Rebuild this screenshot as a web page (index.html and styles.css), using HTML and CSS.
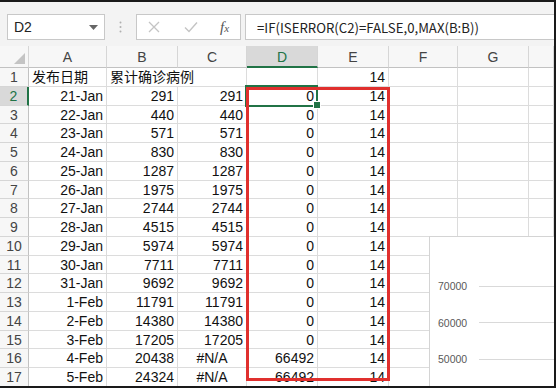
FILE: index.html
```html
<!DOCTYPE html>
<html>
<head>
<meta charset="utf-8">
<link rel="stylesheet" href="styles.css">
</head>
<body>
<div class="frame">
  <div class="fbar">
    <div class="namebox">
      <span class="name">D2</span>
      <svg class="caret" width="9" height="5" viewBox="0 0 9 5"><path d="M0 0H9L4.5 5Z" fill="#666"/></svg>
    </div>
    <div class="dots">
      <svg width="3" height="12" viewBox="0 0 3 12"><circle cx="1.5" cy="1.5" r="1" fill="#b0b0b0"/><circle cx="1.5" cy="6" r="1" fill="#b0b0b0"/><circle cx="1.5" cy="10.5" r="1" fill="#b0b0b0"/></svg>
    </div>
    <div class="fxbox">
      <svg class="ico" width="12" height="12" viewBox="0 0 12 12"><path d="M1 1L11 11M11 1L1 11" stroke="#c4c4c4" stroke-width="1.3" fill="none"/></svg>
      <svg class="ico" width="14" height="12" viewBox="0 0 14 12"><path d="M1 6.5L5 10.5L13 1.5" stroke="#c4c4c4" stroke-width="1.4" fill="none"/></svg>
      <span class="fx"><i>f</i><i class="x">x</i></span>
    </div>
    <div class="formula">=IF(ISERROR(C2)=FALSE,0,MAX(B:B))</div>
  </div>
  <div class="sheet">
    <div class="hd corner"><span class="tri"></span></div>
    <div class="hd">A</div><div class="hd">B</div><div class="hd">C</div><div class="hd hsel">D</div><div class="hd">E</div><div class="hd">F</div><div class="hd">G</div><div class="hd"></div>

    <div class="rn">1</div><div class="c l">发布日期</div><div class="c l span2">累计确诊病例</div><div class="c"></div><div class="c">14</div><div class="c"></div><div class="c"></div><div class="c"></div>
    <div class="rn rsel">2</div><div class="c">21-Jan</div><div class="c">291</div><div class="c">291</div><div class="c sel">0</div><div class="c">14</div><div class="c"></div><div class="c"></div><div class="c"></div>
    <div class="rn">3</div><div class="c">22-Jan</div><div class="c">440</div><div class="c">440</div><div class="c">0</div><div class="c">14</div><div class="c"></div><div class="c"></div><div class="c"></div>
    <div class="rn">4</div><div class="c">23-Jan</div><div class="c">571</div><div class="c">571</div><div class="c">0</div><div class="c">14</div><div class="c"></div><div class="c"></div><div class="c"></div>
    <div class="rn">5</div><div class="c">24-Jan</div><div class="c">830</div><div class="c">830</div><div class="c">0</div><div class="c">14</div><div class="c"></div><div class="c"></div><div class="c"></div>
    <div class="rn">6</div><div class="c">25-Jan</div><div class="c">1287</div><div class="c">1287</div><div class="c">0</div><div class="c">14</div><div class="c"></div><div class="c"></div><div class="c"></div>
    <div class="rn">7</div><div class="c">26-Jan</div><div class="c">1975</div><div class="c">1975</div><div class="c">0</div><div class="c">14</div><div class="c"></div><div class="c"></div><div class="c"></div>
    <div class="rn">8</div><div class="c">27-Jan</div><div class="c">2744</div><div class="c">2744</div><div class="c">0</div><div class="c">14</div><div class="c"></div><div class="c"></div><div class="c"></div>
    <div class="rn">9</div><div class="c">28-Jan</div><div class="c">4515</div><div class="c">4515</div><div class="c">0</div><div class="c">14</div><div class="c"></div><div class="c"></div><div class="c"></div>
    <div class="rn">10</div><div class="c">29-Jan</div><div class="c">5974</div><div class="c">5974</div><div class="c">0</div><div class="c">14</div><div class="c"></div><div class="c"></div><div class="c"></div>
    <div class="rn">11</div><div class="c">30-Jan</div><div class="c">7711</div><div class="c">7711</div><div class="c">0</div><div class="c">14</div><div class="c"></div><div class="c"></div><div class="c"></div>
    <div class="rn">12</div><div class="c">31-Jan</div><div class="c">9692</div><div class="c">9692</div><div class="c">0</div><div class="c">14</div><div class="c"></div><div class="c"></div><div class="c"></div>
    <div class="rn">13</div><div class="c">1-Feb</div><div class="c">11791</div><div class="c">11791</div><div class="c">0</div><div class="c">14</div><div class="c"></div><div class="c"></div><div class="c"></div>
    <div class="rn">14</div><div class="c">2-Feb</div><div class="c">14380</div><div class="c">14380</div><div class="c">0</div><div class="c">14</div><div class="c"></div><div class="c"></div><div class="c"></div>
    <div class="rn">15</div><div class="c">3-Feb</div><div class="c">17205</div><div class="c">17205</div><div class="c">0</div><div class="c">14</div><div class="c"></div><div class="c"></div><div class="c"></div>
    <div class="rn">16</div><div class="c">4-Feb</div><div class="c">20438</div><div class="c ctr">#N/A</div><div class="c">66492</div><div class="c">14</div><div class="c"></div><div class="c"></div><div class="c"></div>
    <div class="rn">17</div><div class="c">5-Feb</div><div class="c">24324</div><div class="c ctr">#N/A</div><div class="c">66492</div><div class="c">14</div><div class="c"></div><div class="c"></div><div class="c"></div>

    <div class="redbox"></div>
    <div class="chart">
      <div class="axrow"><span class="lbl">70000</span><span class="gl"></span></div>
      <div class="axrow"><span class="lbl">60000</span><span class="gl"></span></div>
      <div class="axrow"><span class="lbl">50000</span><span class="gl"></span></div>
    </div>
  </div>
</div>
</body>
</html>
```
FILE: styles.css
```css
* { box-sizing: border-box; }
html, body { margin: 0; padding: 0; background: #fff; }
body { font-family: "Liberation Sans", "Noto Sans CJK SC", sans-serif; }

.frame {
  width: 556px;
  height: 388px;
  border-top: 2px solid #1a1a1a;
  border-right: 2px solid #1a1a1a;
  border-bottom: 2px solid #1a1a1a;
  overflow: hidden;
  background: #fff;
}

.fbar {
  height: 44px;
  background: #f3f3f3;
  display: flex;
  align-items: flex-start;
  padding: 12px 0 0 7px;
}
.namebox {
  width: 98px;
  height: 26px;
  background: #fff;
  border: 1px solid #c8c8c8;
  display: flex;
  align-items: center;
  justify-content: space-between;
  padding: 0 6px 0 6px;
}
.name { font-size: 14px; color: #222; }
.caret { margin-top: 1px; }
.dots { width: 31px; height: 26px; display: flex; align-items: center; justify-content: center; }
.fxbox {
  width: 105px;
  height: 26px;
  background: #fff;
  border: 1px solid #c8c8c8;
  display: flex;
  align-items: center;
  padding-left: 11px;
}
.fxbox .ico:nth-child(1) { margin-right: 24px; }
.fxbox .ico:nth-child(2) { margin-right: 22px; }
.fx { font-family: "Liberation Serif", serif; font-size: 15px; color: #555; }
.fx .x { font-size: 11px; }
.formula {
  flex: 1;
  height: 26px;
  margin-left: 4px;
  background: #fff;
  border: 1px solid #c8c8c8;
  border-right: 0;
  display: flex;
  align-items: center;
  padding-left: 11px;
  font-family: "Noto Sans CJK SC", sans-serif;
  font-size: 13.2px;
  color: #222;
  white-space: nowrap;
}

.sheet {
  position: relative;
  display: grid;
  grid-template-columns: 29px 78px 71px 69px 71px 71px 69px 71px 1fr;
  grid-template-rows: 22px repeat(17, 18.75px);
  font-size: 14px;
  color: #111;
}
.hd {
  background: #f7f7f7;
  border-right: 1px solid #d6d6d6;
  border-bottom: 1px solid #c2c2c2;
  text-align: center;
  color: #444;
  font-size: 14px;
  line-height: 22px;
}
.corner { position: relative; }
.tri {
  position: absolute;
  right: 3px;
  bottom: 3px;
  width: 0; height: 0;
  border-left: 11px solid transparent;
  border-bottom: 11px solid #c4c4c4;
}
.hsel {
  background: #d9d9d9;
  border-bottom: 2px solid #217346;
  color: #217346;
}
.rn {
  background: #f7f7f7;
  border-right: 1px solid #c2c2c2;
  border-bottom: 1px solid #d6d6d6;
  text-align: center;
  color: #444;
  line-height: 19px;
}
.rsel {
  background: #d9d9d9;
  border-right: 2px solid #217346;
  color: #217346;
}
.c {
  border-right: 1px solid #dcdcdc;
  border-bottom: 1px solid #dcdcdc;
  text-align: right;
  padding: 0 3px;
  line-height: 19px;
  white-space: nowrap;
}
.c.l { text-align: left; padding-left: 3px; }
.c.ctr { text-align: center; }
.span2 { grid-column: span 2; }
.sel { position: relative; }
.sel::after {
  content: "";
  position: absolute;
  left: -2px; top: -2px; right: -1px; bottom: -2px;
  border: 2px solid #217346;
}
.sel::before {
  content: "";
  position: absolute;
  right: -4px; bottom: -4px;
  width: 6px; height: 6px;
  background: #217346;
  border: 1px solid #fff;
  z-index: 2;
}

.redbox {
  position: absolute;
  left: 246px;
  top: 41px;
  width: 144px;
  height: 294px;
  border: 3px solid #e0302e;
  z-index: 3;
}
.chart {
  position: absolute;
  left: 429px;
  top: 190px;
  right: 0;
  bottom: 0;
  background: #fff;
  border-left: 1px solid #d4d4d4;
  border-top: 1px solid #d4d4d4;
  display: flex;
  flex-direction: column;
  padding-top: 42px;
  gap: 22.5px;
  z-index: 4;
}
.axrow { height: 14px; display: flex; align-items: center; }
.lbl {
  width: 49px;
  padding-left: 8px;
  font-size: 10.5px;
  color: #595959;
}
.gl { flex: 1; height: 1px; background: #d9d9d9; }
```
